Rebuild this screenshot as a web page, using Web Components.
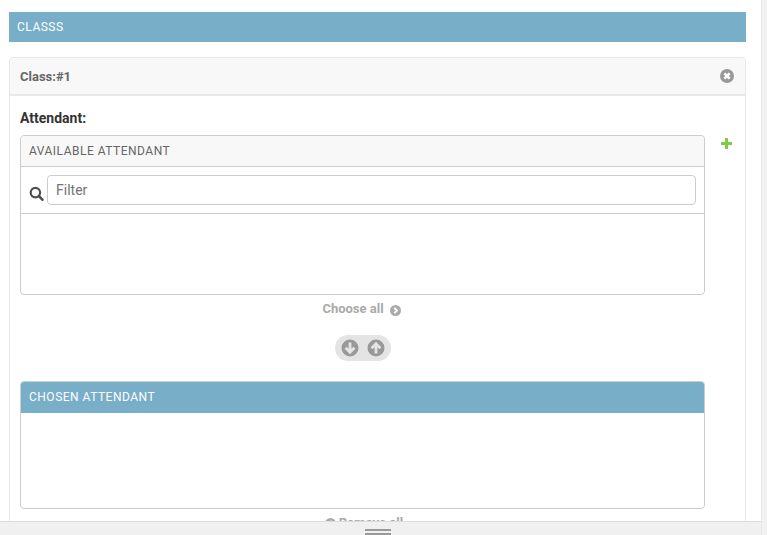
<!DOCTYPE html>
<html>
<head>
<meta charset="utf-8">
<title>Classs</title>
<style>
  html, body { margin: 0; height: 100%; overflow: hidden; background: #fff; }
  body { font-family: Roboto, "Liberation Sans", sans-serif; }
</style>
</head>
<body>
<admin-shell>
  <module-bar>CLASSS</module-bar>
  <inline-card title-text="Class:#1">
    <attendant-field></attendant-field>
  </inline-card>
</admin-shell>

<script>
const ICONS = {
  search: `<svg width="15" height="15" viewBox="0 0 15 15"><circle cx="6.4" cy="6.6" r="4.7" fill="none" stroke="#4f4f4f" stroke-width="2.2"/><path d="M9.9 10.1l3.5 3.6" stroke="#4f4f4f" stroke-width="2.6" stroke-linecap="round"/></svg>`,
  close: `<svg width="14" height="14" viewBox="0 0 14 14"><circle cx="7" cy="7" r="7" fill="#999"/><path d="M4.4 4.4l5.2 5.2M9.6 4.4l-5.2 5.2" stroke="#fff" stroke-width="2.6"/></svg>`,
  plus: `<svg width="11" height="11" viewBox="0 0 11 11"><path d="M4 .5Q4 0 4.5 0h2q.5 0 .5.5V4h3.500q.5 0 .5.5v2q0 .5-.5.5H7v3.500q0 .5-.5.5h-2q-.5 0-.5-.5V7H.5Q0 7 0 6.500v-2Q0 4 .5 4H4z" fill="#7fcb45"/></svg>`,
  right: `<svg width="11" height="11" viewBox="0 0 11 11"><circle cx="5.5" cy="5.5" r="5.5" fill="#aaa"/><path d="M4.300 2.800l2.700 2.700-2.700 2.700" fill="none" stroke="#fff" stroke-width="1.9"/></svg>`,
  left: `<svg width="11" height="11" viewBox="0 0 11 11"><circle cx="5.5" cy="5.5" r="5.5" fill="#aaa"/><path d="M6.700 2.800L4 5.500l2.700 2.700" fill="none" stroke="#fff" stroke-width="1.9"/></svg>`,
  down: `<svg width="18" height="18" viewBox="0 0 18 18"><circle cx="9" cy="9" r="8.5" fill="#999"/><path d="M9 3.500v9.500M4.600 8.800L9 13.200l4.400-4.400" fill="none" stroke="#e4e4e4" stroke-width="2.800"/></svg>`,
  up: `<svg width="18" height="18" viewBox="0 0 18 18"><circle cx="9" cy="9" r="8.5" fill="#999"/><path d="M9 14.500V5M4.600 9.200L9 4.800l4.400 4.400" fill="none" stroke="#e4e4e4" stroke-width="2.800"/></svg>`,
};

// page frame: scrolling area, strip on the right and the drag bar below
class AdminShell extends HTMLElement {
  constructor() {
    super();
    const shadow = this.attachShadow({ mode: 'open' });
    shadow.innerHTML = `
      <style>
        :host { display: flex; height: 535px; width: 767px; }
        .left { width: 761px; display: flex; flex-direction: column; }
        .content { flex: 1; min-height: 0; overflow: hidden; padding: 12px 15px 0 9px; }
        .drag {
          height: 14px; flex-shrink: 0; background: #f0f0f0; border-top: 1px solid #dcdcdc;
          display: flex; flex-direction: column; align-items: center; gap: 2px; padding-top: 7px;
          box-sizing: border-box;
        }
        .drag i { display: block; width: 26px; height: 2px; background: #999; margin-left: -5px; flex-shrink: 0; }
        .strip { width: 6px; background: #f1f1f1; border-left: 1px solid #e8e8e8; box-sizing: border-box; }
      </style>
      <div class="left">
        <div class="content"><slot></slot></div>
        <div class="drag"><i></i><i></i></div>
      </div>
      <div class="strip"></div>
    `;
  }
}

class ModuleBar extends HTMLElement {
  constructor() {
    super();
    const shadow = this.attachShadow({ mode: 'open' });
    shadow.innerHTML = `
      <style>
        :host {
          display: block; height: 30px; line-height: 30px; padding-left: 8px;
          background: #79aec8; color: #fff; font-size: 12px; letter-spacing: 0.5px;
        }
      </style>
      <slot></slot>
    `;
  }
}

class InlineCard extends HTMLElement {
  constructor() {
    super();
    const shadow = this.attachShadow({ mode: 'open' });
    shadow.innerHTML = `
      <style>
        :host {
          display: block; margin-top: 15px; border: 1px solid #e8e8e8; border-radius: 4px;
          background: #fff;
        }
        header {
          height: 36px; padding: 0 11px 0 10px; background: #f8f8f8; border-bottom: 2px solid #e8e8e8;
          display: flex; align-items: center; justify-content: space-between; border-radius: 4px 4px 0 0;
        }
        b { font-size: 13px; color: #666; font-weight: 700; }
        svg { display: block; }
        .body { padding: 12px 10px 0; }
      </style>
      <header><b></b>${ICONS.close}</header>
      <div class="body"><slot></slot></div>
    `;
    shadow.querySelector('b').textContent = this.getAttribute('title-text');
  }
}

class SelectorBox extends HTMLElement {
  constructor() {
    super();
    const shadow = this.attachShadow({ mode: 'open' });
    const chosen = this.hasAttribute('chosen');
    shadow.innerHTML = `
      <style>
        :host {
          display: block; border: 1px solid #ccc; border-radius: 4px; overflow: hidden; background: #fff;
        }
        .title {
          height: 30px; line-height: 30px; padding-left: 8px; font-size: 12px; letter-spacing: 0.5px;
          background: ${chosen ? '#79aec8' : '#f8f8f8'}; color: ${chosen ? '#fff' : '#666'};
          border-bottom: 1px solid ${chosen ? '#79aec8' : '#ccc'};
        }
        .list { height: var(--list-height, 80px); }
      </style>
      <div class="title"></div>
      <slot></slot>
      <div class="list"></div>
    `;
    shadow.querySelector('.title').textContent = this.getAttribute('label');
  }
}

class FilterRow extends HTMLElement {
  constructor() {
    super();
    const shadow = this.attachShadow({ mode: 'open' });
    shadow.innerHTML = `
      <style>
        :host {
          display: flex; align-items: center; height: 46px; padding: 0 8px; gap: 3px;
          border-bottom: 1px solid #ccc; box-sizing: content-box;
        }
        svg { display: block; margin-top: 7px; flex-shrink: 0; }
        .input {
          flex: 1; height: 28px; line-height: 28px; box-sizing: content-box; border: 1px solid #ccc;
          border-radius: 4px; padding: 0 8px; font-size: 14px; color: #757575;
        }
      </style>
      ${ICONS.search}
      <div class="input">Filter</div>
    `;
  }
}

class AttendantField extends HTMLElement {
  constructor() {
    super();
    const shadow = this.attachShadow({ mode: 'open' });
    shadow.innerHTML = `
      <style>
        :host { display: block; }
        label { display: block; height: 27px; line-height: 20px; font-size: 14px; font-weight: 700; color: #333; }
        .row { display: flex; align-items: flex-start; }
        .col { width: 685px; flex-shrink: 0; }
        .add { margin: 3px 0 0 16px; }
        .add svg { display: block; }
        .link {
          display: flex; justify-content: center; align-items: center; height: 14px;
          font-size: 13px; font-weight: 700; color: #aaa;
        }
        .choose { margin-top: 6px; gap: 6px; padding-right: 2px; }
        .choose svg { margin-top: 4px; }
        .pill {
          width: 56px; height: 26px; margin: 20px auto 20px; border-radius: 13px; background: #e4e4e4;
          display: flex; align-items: center; justify-content: center; gap: 8px;
        }
        .pill svg { display: block; }
        .chosen { --list-height: 95px; }
        .remove { margin-top: 6px; gap: 3px; padding-left: 3px; }
        .remove svg { margin-top: 2px; }
      </style>
      <label>Attendant:</label>
      <div class="row">
        <div class="col">
          <selector-box label="AVAILABLE ATTENDANT"><filter-row></filter-row></selector-box>
          <div class="link choose">Choose all ${ICONS.right}</div>
          <div class="pill">${ICONS.down}${ICONS.up}</div>
          <selector-box class="chosen" chosen label="CHOSEN ATTENDANT"></selector-box>
          <div class="link remove">${ICONS.left} Remove all</div>
        </div>
        <div class="add">${ICONS.plus}</div>
      </div>
    `;
  }
}

customElements.define('admin-shell', AdminShell);
customElements.define('module-bar', ModuleBar);
customElements.define('inline-card', InlineCard);
customElements.define('selector-box', SelectorBox);
customElements.define('filter-row', FilterRow);
customElements.define('attendant-field', AttendantField);
</script>
</body>
</html>
